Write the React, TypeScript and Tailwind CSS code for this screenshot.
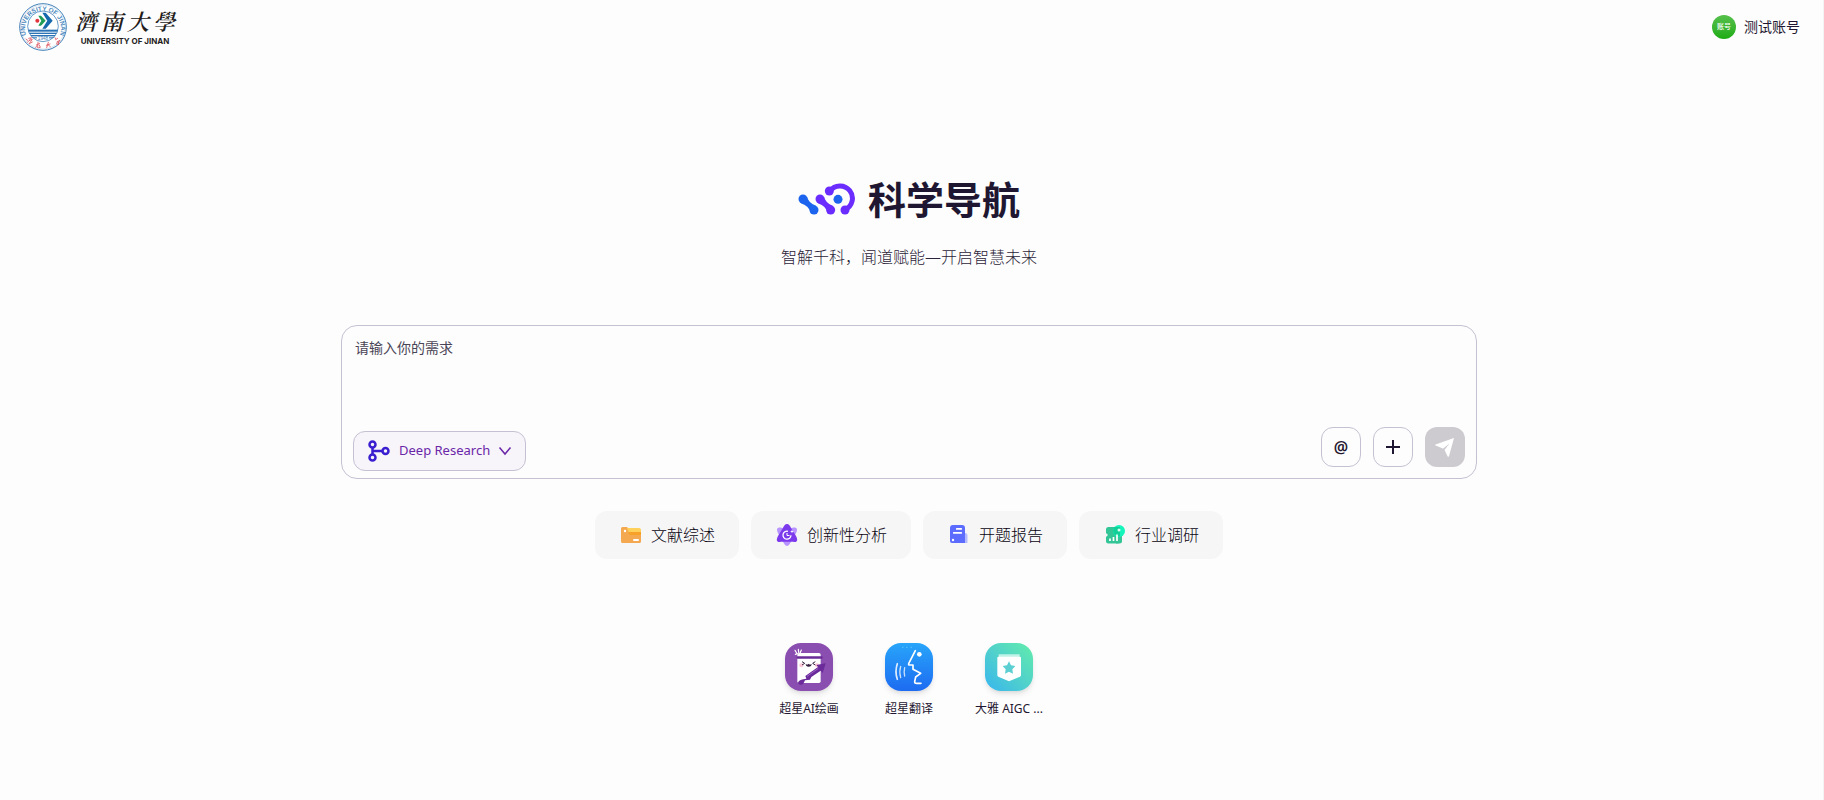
import React from "react";

const Emblem: React.FC = () => (
  <svg viewBox="0 0 144 144" className="size-12" aria-hidden="true">
    <defs>
      <path id="ring-top" d="M21 95 A54 54 0 1 1 123 95" />
      <clipPath id="inner-disc">
        <circle cx="72" cy="70" r="46" />
      </clipPath>
    </defs>
    <circle cx="72" cy="72" r="70" fill="#fff" stroke="#3f7fb8" strokeWidth="3" />
    <circle cx="72" cy="72" r="66" fill="none" stroke="#8db4d8" strokeWidth="1" />
    <circle cx="72" cy="70" r="46" fill="#fff" stroke="#4a87bd" strokeWidth="2.5" />
    <text fontSize="19" fontWeight="bold" fill="#4a87bd" fontFamily="Liberation Sans, sans-serif">
      <textPath href="#ring-top" startOffset="50%" textAnchor="middle">
        UNIVERSITY OF JINAN
      </textPath>
    </text>
    <g clipPath="url(#inner-disc)" fill="#2c74b5">
      <rect x="24" y="80" width="96" height="6" />
      <rect x="24" y="89" width="96" height="4" />
      <rect x="24" y="96" width="96" height="4" />
      <rect x="24" y="103" width="30" height="3" />
      <rect x="90" y="103" width="30" height="3" />
    </g>
    <circle cx="55" cy="53" r="6" fill="#e2343c" />
    <path d="M58 38 h8 l14 15 -14 15 h-8 l9 -15z" fill="#1f9d57" />
    <path d="M70 29 h10 l21 24 -21 24 h-10 l15 -24z" fill="#1769ae" />
    <text x="72" y="112" textAnchor="middle" fontSize="14" fill="#3f7fb8" fontFamily="Liberation Sans, sans-serif">
      1948
    </text>
    <g fill="none" stroke="#dd5560" strokeWidth="2.5" strokeLinecap="round">
      <path d="M21 108l5 4M25 118l4-4M29 106l9-2-8 9 10-4-8 11M31 122l9-5" />
      <path d="M52 126l10-5M57 118l-1 16M61 126l3 7-5 1M50 133l4-5" />
      <path d="M82 127l11-4M88 118l-5 16M88 126l6 5" />
      <path d="M110 110l6-4M114 116l9-4-5 5 1 8-5-1M108 104l2 4M112 121l9-4" />
    </g>
  </svg>
);

const BrandMark: React.FC = () => (
  <svg viewBox="87 53 174 96" className="h-8 w-[58px]" aria-hidden="true">
    <g fill="#1c64ee">
      <circle cx="102" cy="101" r="13.5" />
      <circle cx="135" cy="134" r="13.5" />
      <path d="M114 94 Q117 111 142 122 L126 145 Q121 122 96 114z" />
      <circle cx="207" cy="102" r="13.5" />
    </g>
    <g fill="#6a2cff">
      <circle cx="153" cy="101" r="13.5" />
      <circle cx="185" cy="134" r="13.5" />
      <path d="M165 94 Q168 111 192 122 L176 145 Q172 122 147 114z" />
      <circle cx="181" cy="77" r="13.5" />
      <circle cx="228" cy="134" r="13.5" />
    </g>
    <path d="M183 77 A37.2 37.2 0 1 1 228 133" fill="none" stroke="#6a2cff" strokeWidth="15" />
  </svg>
);

const BranchIcon: React.FC = () => (
  <svg viewBox="0 0 24 24" className="size-6" fill="none" stroke="#3a1fd0" strokeWidth="2.500" aria-hidden="true">
    <circle cx="5.500" cy="5.500" r="3" />
    <circle cx="5.500" cy="18.500" r="3" />
    <circle cx="18.500" cy="12" r="3" />
    <path d="M5.500 8.500v7M5.500 12h10" />
  </svg>
);

const FolderIcon: React.FC = () => (
  <svg viewBox="0 0 24 24" className="size-6" aria-hidden="true">
    <path d="M2 5.500A1.500 1.500 0 0 1 3.500 4H8l2.500 3H22v11.500a1.500 1.500 0 0 1-1.500 1.500h-17A1.500 1.500 0 0 1 2 18.500z" fill="#f4a950" />
    <path d="M8 5h12a2 2 0 0 1 2 2v4H12a2 2 0 0 1-1.800-1z" fill="#ffd05a" />
    <path d="M9.500 9H22v3H12a2.500 2.500 0 0 1-2.500-3z" fill="#f7a128" />
    <circle cx="6" cy="8" r="1.200" fill="#fff" />
    <rect x="14" y="16" width="6" height="2" rx="1" fill="#fff" />
  </svg>
);

const AtomIcon: React.FC = () => (
  <svg viewBox="0 0 24 24" className="size-6" aria-hidden="true">
    <path d="M12 23c-1.800 0-3-2.500-4.500-5h9c-1.500 2.500-2.700 5-4.500 5zM2.300 5.500C3.300 4 5.500 4.500 9 5.500l-4.500 7C2.800 10 1.300 7.500 2.300 5.500zM21.700 5.500c-1-1.500-3.200-1-6.700 0l4.500 7c1.700-2.500 3.200-5 2.200-7z" fill="#b794ff" />
    <path d="M12 1c2 0 3 2 4.200 4.200L21 13c1 2 1.800 4 .7 5.200-1.200 1.300-3.200.6-5.700.6H8c-2.500 0-4.500.7-5.700-.6C1.200 17 2 15 3 13l4.800-7.800C9 3 10 1 12 1z" fill="#7c3aed" />
    <path d="M13 8.300a4 4 0 1 0 3 4" fill="none" stroke="#fff" strokeWidth="1.300" />
    <path d="M12 10v2.500h2.500" fill="none" stroke="#fff" strokeWidth="1" />
    <path d="M17 6.500l.5 1.500 1.500.5-1.500.5-.5 1.500-.5-1.500-1.500-.5 1.500-.5z" fill="#fff" />
  </svg>
);

const ReportIcon: React.FC = () => (
  <svg viewBox="0 0 24 24" className="size-6" aria-hidden="true">
    <path d="M15 10h3a2.500 2.500 0 0 1 2.500 2.500V20H15z" fill="#b5bbff" />
    <path d="M3 5a3 3 0 0 1 3-3h9a3 3 0 0 1 3 3v15H5a2 2 0 0 1-2-2z" fill="#5b6cff" />
    <rect x="9" y="5" width="6" height="1.800" rx=".5" fill="#fff" />
    <rect x="6" y="9" width="9" height="1.800" rx=".5" fill="#fff" />
    <circle cx="6" cy="17" r="1.200" fill="#fff" />
  </svg>
);

const TrendIcon: React.FC = () => (
  <svg viewBox="0 0 24 24" className="size-6" aria-hidden="true">
    <path d="M3 6.500A2.500 2.500 0 0 1 5.500 4H17v14a2.500 2.500 0 0 1-2.500 2.500h-9A2.500 2.500 0 0 1 3 18v-4l2-2-2-2z" fill="#34c597" />
    <path d="M13 11h6v7a2.500 2.500 0 0 1-2.500 2.500H13z" fill="#34c597" />
    <circle cx="16" cy="8" r="6" fill="#14f5bb" />
    <path d="M16.500 13.500A6 6 0 0 1 10.300 6q.3-1 1-2H17v9.500z" fill="#12cf97" />
    <circle cx="16" cy="7" r="1.500" fill="#d6fff0" />
    <path d="M7 15.500V18M10.500 14v4M14 11.500V18" stroke="#fff" strokeWidth="1.700" />
  </svg>
);

const SendIcon: React.FC = () => (
  <svg viewBox="0 0 24 24" className="size-6" fill="#fff" aria-hidden="true">
    <path d="M21 3 L2.500 9.500 C2 9.800 2 10.300 2.500 10.600 L10 13.500z" />
    <path d="M21 3 L16 21.300 C15.800 21.900 15 21.900 14.700 21.400 L11.500 15 L16.500 8.500 L10 13.500 L6.500 11z" />
  </svg>
);

const PaintingIcon: React.FC = () => (
  <svg viewBox="0 0 144 144" className="size-12 rounded-2xl shadow-md" aria-hidden="true">
    <rect width="144" height="144" fill="#8a4db0" />
    <path d="M30 22l5 8M40 19l1 9M49 21l-4 10M31 34l6-2" stroke="#fff" strokeWidth="3.500" strokeLinecap="round" />
    <path d="M37 35q0-5 5-5h60q5 0 5 5v80q0 5-5 5H42q-5 0-5-5z" fill="#fff" />
    <rect x="35" y="40" width="78" height="7" rx="3" fill="#6a2c96" />
    <circle cx="49" cy="67" r="6" fill="#ffc8d6" />
    <circle cx="96" cy="67" r="6" fill="#ffc8d6" />
    <path d="M51 56l8 5-8 5M91 56l-8 5 8 5" fill="none" stroke="#352040" strokeWidth="3" />
    <path d="M62 62q5 5 9 0q5 5 9 0q0 9-9 9t-9-9z" fill="#352040" />
    <path d="M122 61L94 66l5 6-38 27 3 8-9 2q-14 2-16 11q6 10 16 2l5-10 15-2 4-8 28-19 6 7z" fill="#6b2b9b" />
    <path d="M100 76L66 100" stroke="#9b63c3" strokeWidth="3" />
  </svg>
);

const TranslateIcon: React.FC = () => (
  <svg viewBox="0 0 144 144" className="size-12 rounded-2xl shadow-md" aria-hidden="true">
    <defs>
      <linearGradient id="translate-bg" x1="0" y1="0" x2="0" y2="1">
        <stop offset="0" stopColor="#28a5fa" />
        <stop offset="1" stopColor="#1d6bf1" />
      </linearGradient>
    </defs>
    <rect width="144" height="144" fill="url(#translate-bg)" />
    <g fill="none" stroke="#fff" strokeLinecap="round">
      <path d="M91 23L71 62q-1 4 3 4h10L84 79l23 12-15 11-3 14q0 5 6 5h13" strokeWidth="5" strokeLinejoin="round" />
      <path d="M37 62q-8 23 0 47" strokeWidth="5" opacity=".85" />
      <path d="M47 70q-5 16 0 34M59 74q-3 12 0 25" strokeWidth="4" opacity=".75" />
    </g>
    <circle cx="103" cy="34" r="7" fill="#fff" />
    <path d="M52 13h3M64 13h3M77 13h3" stroke="#6bd0ff" strokeWidth="3" />
  </svg>
);

const AigcIcon: React.FC = () => (
  <svg viewBox="0 0 144 144" className="size-12 rounded-2xl shadow-md" aria-hidden="true">
    <defs>
      <linearGradient id="aigc-bg" x1="0" y1="1" x2="1" y2="0">
        <stop offset="0" stopColor="#37b5f0" />
        <stop offset=".5" stopColor="#51d1cb" />
        <stop offset="1" stopColor="#62edab" />
      </linearGradient>
    </defs>
    <rect width="144" height="144" fill="url(#aigc-bg)" />
    <path d="M41 34h63v10H41z" fill="#c1f2e7" />
    <path d="M37 44q0-3 3-3h65q3 0 3 3v53q0 3-3 4l-33 14-32-14q-3-1-3-4z" fill="#fff" />
    <path d="M72 55l6 12 13 2-9 10 2 13-12-6-12 6 2-13-9-10 13-2z" fill="#5bcfd1" />
  </svg>
);

const Home: React.FC = () => {
  const prompts = [
    { title: "文献综述", icon: <FolderIcon /> },
    { title: "创新性分析", icon: <AtomIcon /> },
    { title: "开题报告", icon: <ReportIcon /> },
    { title: "行业调研", icon: <TrendIcon /> },
  ];

  const apps = [
    { title: "超星AI绘画", icon: <PaintingIcon /> },
    { title: "超星翻译", icon: <TranslateIcon /> },
    { title: "大雅 AIGC ...", icon: <AigcIcon /> },
  ];

  return (
    <div className="min-h-screen border-r border-[#f3f3f3] bg-[#fdfdfd] pr-[5px] font-['Noto_Sans','Noto_Sans_CJK_SC',sans-serif] text-[#1f1731]">
      <header className="flex h-[54px] items-center justify-between pr-[18px] pl-[19px]">
        <a href="#" className="flex items-center gap-2">
          <Emblem />
          <span className="flex flex-col items-center text-[#231c1c]">
            <span className="flex gap-1 font-['Noto_Serif_CJK_SC','Noto_Sans_CJK_TC',serif] text-[22px] leading-7 font-semibold italic">
              <span>濟</span>
              <span>南</span>
              <span>大</span>
              <span>學</span>
            </span>
            <span className="font-['Inter','Liberation_Sans',sans-serif] text-[8px] leading-3 font-bold whitespace-nowrap">
              UNIVERSITY OF JINAN
            </span>
          </span>
        </a>
        <button className="flex items-center gap-2 text-sm text-[#1f1731]">
          <span className="flex size-6 items-center justify-center rounded-full bg-linear-to-b from-[#55c04c] to-[#1aac0d] text-[7px] font-medium text-white">
            账号
          </span>
          测试账号
        </button>
      </header>

      <main className="flex flex-col items-center px-6 pt-[117px]">
        <div className="flex items-center gap-3">
          <BrandMark />
          <h1 className="text-[38px] leading-[56px] font-bold">科学导航</h1>
        </div>
        <p className="mt-[18px] text-base leading-6 font-light text-[#2b2438]">智解千科，闻道赋能—开启智慧未来</p>

        <form className="mt-14 w-full max-w-[1136px] rounded-2xl border border-[#c5c1d2] px-[11px] pt-3 pb-[7px]">
          <textarea
            aria-label="请输入你的需求"
            placeholder="请输入你的需求"
            className="block h-[84px] w-full resize-none px-0.5 text-sm leading-5 outline-none placeholder:text-[#4a4556]"
          />
          <div className="flex justify-between">
            <button
              type="button"
              className="mt-[9px] flex h-10 items-center gap-2 rounded-xl border border-[#c5c1d2] bg-[#f7f4fa] px-[13px] text-[13px] text-[#6a27a8]"
            >
              <BranchIcon />
              Deep Research
              <svg viewBox="0 0 14 10" className="h-2.5 w-3.5" fill="none" stroke="#6a27a8" strokeWidth="1.500" aria-hidden="true">
                <path d="M1.500 1.500L7 8l5.500-6.500" />
              </svg>
            </button>
            <div className="mt-[5px] flex gap-3">
              <button
                type="button"
                aria-label="@"
                className="flex size-10 items-center justify-center rounded-xl border border-[#c5c1d2] text-base font-semibold"
              >
                @
              </button>
              <button
                type="button"
                aria-label="添加"
                className="flex size-10 items-center justify-center rounded-xl border border-[#c5c1d2]"
              >
                <svg viewBox="0 0 14 14" className="size-3.5" stroke="#1f1731" strokeWidth="2" aria-hidden="true">
                  <path d="M7 0v14M0 7h14" />
                </svg>
              </button>
              <button
                type="submit"
                aria-label="发送"
                className="flex size-10 items-center justify-center rounded-xl bg-[#cecbd0]"
              >
                <SendIcon />
              </button>
            </div>
          </div>
        </form>

        <div className="mt-8 flex flex-wrap justify-center gap-3">
          {prompts.map((item) => (
            <button key={item.title} className="flex h-12 items-center gap-2 rounded-xl bg-[#f6f6f6] px-6 text-base font-light text-[#080310]">
              {item.icon}
              {item.title}
            </button>
          ))}
        </div>

        <div className="mt-[84px] flex gap-5">
          {apps.map((app) => (
            <a key={app.title} href="#" className="flex w-20 flex-col items-center gap-2 text-xs leading-5 whitespace-nowrap">
              {app.icon}
              {app.title}
            </a>
          ))}
        </div>
      </main>
    </div>
  );
};

export default Home;
